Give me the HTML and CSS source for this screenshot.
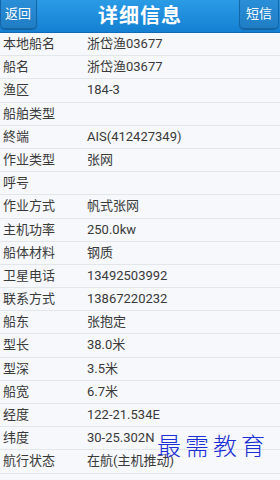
FILE: index.html
```html
<!DOCTYPE html>
<html lang="zh-cn">
	<head>
		<meta charset="utf-8">
		<link rel="stylesheet" href="styles.css">
	</head>
	<body>
		<header class="bar">
			<a class="btn btn-left">返回</a>
			<h1>详细信息</h1>
			<a class="btn btn-right">短信</a>
		</header>

		<ul class="info">
			<li><span class="k">本地船名</span><span class="v">浙岱渔03677</span></li>
			<li><span class="k">船名</span><span class="v">浙岱渔03677</span></li>
			<li><span class="k">渔区</span><span class="v">184-3</span></li>
			<li><span class="k">船舶类型</span><span class="v"></span></li>
			<li><span class="k">終端</span><span class="v">AIS(412427349)</span></li>
			<li><span class="k">作业类型</span><span class="v">张网</span></li>
			<li><span class="k">呼号</span><span class="v"></span></li>
			<li><span class="k">作业方式</span><span class="v">帆式张网</span></li>
			<li><span class="k">主机功率</span><span class="v">250.0kw</span></li>
			<li><span class="k">船体材料</span><span class="v">钢质</span></li>
			<li><span class="k">卫星电话</span><span class="v">13492503992</span></li>
			<li><span class="k">联系方式</span><span class="v">13867220232</span></li>
			<li><span class="k">船东</span><span class="v">张抱定</span></li>
			<li><span class="k">型长</span><span class="v">38.0米</span></li>
			<li><span class="k">型深</span><span class="v">3.5米</span></li>
			<li><span class="k">船宽</span><span class="v">6.7米</span></li>
			<li><span class="k">经度</span><span class="v">122-21.534E</span></li>
			<li><span class="k">纬度</span><span class="v">30-25.302N</span></li>
			<li><span class="k">航行状态</span><span class="v">在航(主机推动)</span></li>
		</ul>

		<div class="mark">最需教育</div>
	</body>
</html>
```

FILE: styles.css
```css
body {
	margin: 0;
	background: #f6f8fb;
	font: 13px "Roboto", "Noto Sans CJK SC", sans-serif;
	color: #333;
	position: relative;
	height: 480px;
	overflow: hidden;
}

.bar {
	height: 32px;
	background: linear-gradient(#2b9be6, #1580d2);
	border-bottom: 1px solid #0f6bb5;
	display: flex;
	align-items: flex-start;
	justify-content: space-between;
	position: relative;
}
.bar h1 {
	position: absolute;
	left: 0;
	right: 0;
	top: 0;
	margin: 0;
	text-align: center;
	color: #fff;
	font: bold 20px/30px "Noto Sans CJK SC", sans-serif;
	letter-spacing: 1px;
}
.btn {
	position: relative;
	z-index: 1;
	height: 28px;
	padding: 0 4px;
	color: #fff;
	font: 13px/26px "Noto Sans CJK SC", sans-serif;
	background: linear-gradient(#2a8fd8, #1f7dc4);
	border: 1px solid #1566a8;
	border-top: 0;
	border-radius: 0 0 5px 5px;
	box-shadow: 0 1px 1px rgba(0, 0, 0, 0.25);
}
.btn-left { padding: 0 5px 0 4px; }
.btn-right { margin-right: 1px; padding: 0 6px; }

.info { list-style: none; margin: 0; padding: 0; }
.info li {
	height: 22.2px;
	line-height: 22px;
	border-bottom: 1px solid #e3e7ec;
	display: flex;
	white-space: nowrap;
}
.info .k { width: 84px; padding-left: 3px; color: #3a3a3a; }
.info .v { color: #3a3a3a; }

.mark {
	position: absolute;
	left: 157px;
	top: 432px;
	color: #1b2fd4;
	font: 300 24px/26px "Noto Sans CJK SC", serif;
	letter-spacing: 4px;
}
```
